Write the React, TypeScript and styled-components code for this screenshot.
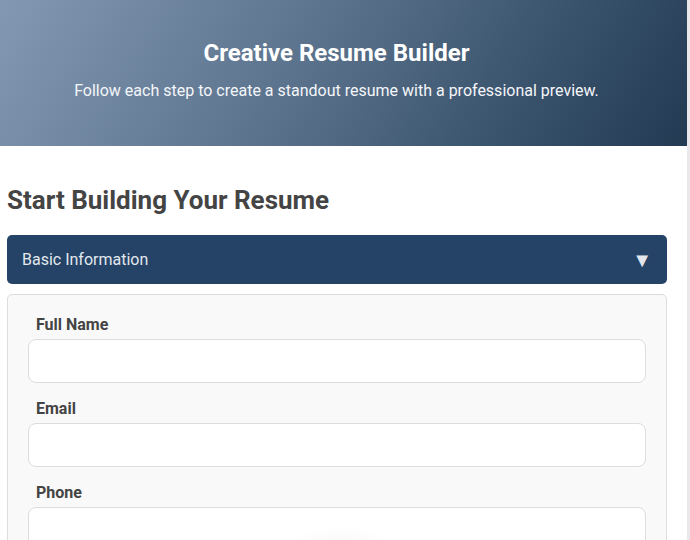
import React from "react";
import styled, { createGlobalStyle } from "styled-components";

const Global = createGlobalStyle`
  body {
    margin: 0;
    font-family: Roboto, "Liberation Sans", Arial, sans-serif;
    background: #ffffff;
    color: #444;
    border-right: 3px solid #e9e9ed;
    min-height: 100vh;
  }
  * { box-sizing: border-box; }
`;

const Hero = styled.header`
  height: 146px;
  background: linear-gradient(120deg, #8399b3 0%, #5f7690 40%, #3f5872 70%, #223a52 100%);
  color: #fff;
  display: flex;
  flex-direction: column;
  align-items: center;
  justify-content: center;
  text-align: center;
  padding: 0 14px 6px 0;
`;

const HeroTitle = styled.h1`
  margin: 0 0 14px;
  font-size: 24px;
  font-weight: 700;
  line-height: 28px;
`;

const HeroText = styled.p`
  margin: 0;
  font-size: 16px;
  line-height: 20px;
  color: #f4f6f9;
`;

const Main = styled.main`
  padding: 39px 20px 0 7px;
`;

const SectionTitle = styled.h2`
  margin: 0 0 20px;
  font-size: 26px;
  font-weight: 700;
  line-height: 30px;
  color: #444;
`;

const AccordionHeader = styled.button`
  width: 100%;
  height: 49px;
  border: none;
  border-radius: 5px;
  background: #244366;
  color: #e3e8ef;
  font-family: inherit;
  font-size: 16px;
  display: flex;
  align-items: center;
  justify-content: space-between;
  padding: 0 15px 0 15px;
  cursor: pointer;
`;

const Caret = styled.span`
  font-size: 20px;
  line-height: 20px;
  color: #e3e6ec;
`;

const Panel = styled.div`
  margin-top: 10px;
  background: #f9f9f9;
  border: 1px solid #dddddd;
  border-radius: 5px;
  padding: 20px 20px 20px;
  display: flex;
  flex-direction: column;
`;

const Field = styled.div`
  display: flex;
  flex-direction: column;
  margin-bottom: 16px;
`;

const Label = styled.label`
  font-size: 16px;
  font-weight: 700;
  color: #444;
  line-height: 20px;
  padding-left: 8px;
  margin-bottom: 4px;
`;

const Input = styled.input`
  height: 44px;
  border: 1px solid #dddddd;
  border-radius: 8px;
  background: #fff;
  font-family: inherit;
  font-size: 15px;
  padding: 0 12px;
`;

const FloatShadow = styled.div`
  position: fixed;
  left: 50%;
  bottom: -60px;
  width: 80px;
  height: 50px;
  margin-left: -44px;
  border-radius: 40px;
  background: transparent;
  box-shadow: 0 -4px 24px rgba(0, 0, 0, 0.07);
  pointer-events: none;
`;

const fields = ["Full Name", "Email", "Phone"];

export default function App() {
  return (
    <>
      <Global />
      <Hero>
        <HeroTitle>Creative Resume Builder</HeroTitle>
        <HeroText>Follow each step to create a standout resume with a professional preview.</HeroText>
      </Hero>
      <Main>
        <SectionTitle>Start Building Your Resume</SectionTitle>
        <AccordionHeader>
          <span>Basic Information</span>
          <Caret>▼</Caret>
        </AccordionHeader>
        <Panel>
          {fields.map((f) => (
            <Field key={f}>
              <Label>{f}</Label>
              <Input type="text" />
            </Field>
          ))}
        </Panel>
      </Main>
      <FloatShadow />
    </>
  );
}
